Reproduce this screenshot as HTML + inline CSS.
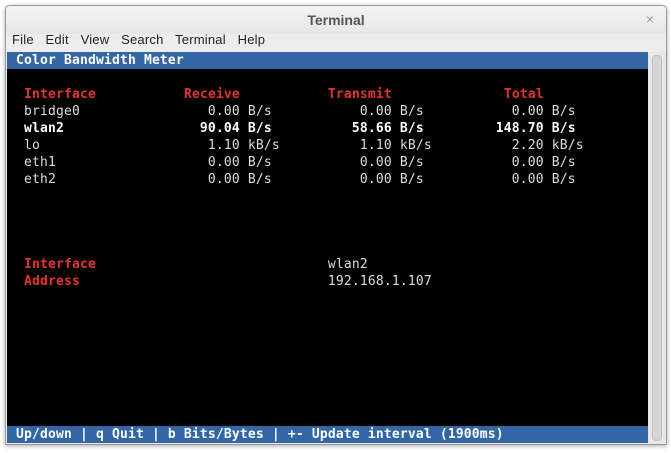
<!DOCTYPE html>
<html><head><style>
body{margin:0;width:671px;height:453px;background:#fff;position:relative;overflow:hidden;font-family:"Liberation Sans",sans-serif}
.win{position:absolute;left:5px;top:5px;width:660px;height:438px;border:1px solid #9a9a9a;border-radius:5px 5px 0 0;background:#ededed;box-shadow:0 1px 4px rgba(0,0,0,.35);overflow:hidden}
.title{position:absolute;left:0;top:0;width:660px;height:28px;text-align:center;line-height:28px;font-weight:bold;font-size:14px;color:#555;background:linear-gradient(#f4f4f4,#e6e6e6)}
.x{position:absolute;right:12px;top:0;line-height:26px;color:#999;font-size:14px;font-weight:normal}
.menu{position:absolute;left:6px;top:26px;font-size:13px;color:#222;line-height:16px;word-spacing:8px;letter-spacing:0.2px}
.term{position:absolute;left:1px;top:46px;width:641px;height:391px;background:#000;overflow:hidden}
.sb{position:absolute;left:642px;top:46px;width:18px;height:392px;background:#e8e8e8}
.sb div{position:absolute;left:4px;top:3px;width:8px;height:384px;border-radius:4px;background:#d6d6d6;border:1px solid #c0c0c0}
pre{margin:0;position:absolute;left:1px;top:0;font-family:"DejaVu Sans Mono",monospace;font-size:13px;line-height:17px;color:#ddd;letter-spacing:0.17px}
.bar{display:block;background:#3466a5;color:#fff;width:641px;margin-left:-1px;padding-left:1px;font-weight:bold}
.r{color:#e53333;font-weight:bold}
b{color:#fff}
</style></head><body>
<div class="win">
<div class="title">Terminal<span class="x">×</span></div>
<div class="menu">File Edit View Search Terminal Help</div>
<div class="term"><pre><span class="bar"> Color Bandwidth Meter</span>
  <span class="r">Interface</span>           <span class="r">Receive</span>           <span class="r">Transmit</span>              <span class="r">Total</span>
  bridge0                0.00 B/s           0.00 B/s           0.00 B/s
  <b>wlan2                 90.04 B/s          58.66 B/s         148.70 B/s</b>
  lo                     1.10 kB/s          1.10 kB/s          2.20 kB/s
  eth1                   0.00 B/s           0.00 B/s           0.00 B/s
  eth2                   0.00 B/s           0.00 B/s           0.00 B/s




  <span class="r">Interface</span>                             wlan2
  <span class="r">Address</span>                               192.168.1.107








<span class="bar"> Up/down | q Quit | b Bits/Bytes | +- Update interval (1900ms)</span></pre></div>
<div class="sb"><div></div></div>
</div>
</body></html>
